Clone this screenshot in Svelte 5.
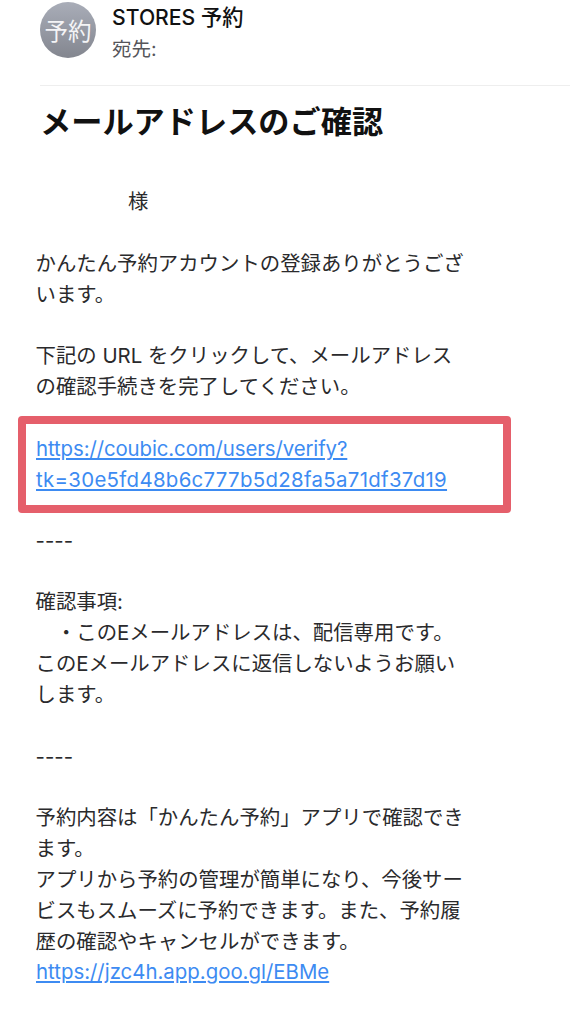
<script>
  const sections = [
    { kind: "text", lines: ["かんたん予約アカウントの登録ありがとうござ", "います。"] },
    { kind: "text", lines: ["下記の URL をクリックして、メールアドレス", "の確認手続きを完了してください。"] },
    { kind: "link", lines: ["https://coubic.com/users/verify?", "tk=30e5fd48b6c777b5d28fa5a71df37d19"] },
    { kind: "text", lines: ["----"] },
    { kind: "text", lines: ["確認事項:", "　・このEメールアドレスは、配信専用です。", "このEメールアドレスに返信しないようお願い", "します。"] },
    { kind: "text", lines: ["----"] },
  ];
</script>

<div class="mail">
  <header class="sender">
    <div class="avatar">予約</div>
    <div class="sender-info">
      <div class="sender-name">STORES 予約</div>
      <div class="sender-to">宛先:</div>
    </div>
  </header>

  <div class="content">
    <h1 class="subject">メールアドレスのご確認</h1>

    <div class="body">
      <p class="greeting">様</p>

      {#each sections as section}
        {#if section.kind === "link"}
          <p class="highlight">
            <a href="https://coubic.com/users/verify"><span class="url-a">{section.lines[0]}</span><br /><span class="url-b">{section.lines[1]}</span></a>
          </p>
        {:else}
          <p>
            {#each section.lines as line}
              <span class="line">{line}</span>
            {/each}
          </p>
        {/if}
      {/each}

      <p>
        <span class="line">予約内容は「かんたん予約」アプリで確認でき</span>
        <span class="line">ます。</span>
        <span class="line">アプリから予約の管理が簡単になり、今後サー</span>
        <span class="line">ビスもスムーズに予約できます。また、予約履</span>
        <span class="line">歴の確認やキャンセルができます。</span>
        <a href="https://jzc4h.app.goo.gl/EBMe">https://jzc4h.app.goo.gl/EBMe</a>
      </p>
    </div>
  </div>
</div>

<style>
  :global(body) {
    background: #ffffff;
  }

  .mail {
    width: 570px;
    height: 1020px;
    overflow: hidden;
    background: #ffffff;
    color: #2a2a2c;
    font-family: Inter, "Noto Sans CJK JP", sans-serif;
  }

  .sender {
    display: flex;
    gap: 16px;
    margin-left: 40px;
    padding-top: 2px;
    height: 86px;
    box-sizing: border-box;
    border-bottom: 1px solid #eeeeee;
  }

  .avatar {
    width: 56px;
    height: 56px;
    border-radius: 50%;
    display: flex;
    align-items: center;
    justify-content: center;
    background: linear-gradient(#a9adb8, #83868f);
    color: #f4f4f6;
    font-size: 23.5px;
  }

  .sender-name {
    font-size: 21.2px;
    line-height: 30px;
    font-weight: 500;
    color: #111111;
  }

  .sender-to {
    margin-top: 3px;
    font-size: 19.5px;
    line-height: 28px;
    color: #55555a;
  }

  .subject {
    margin: 15px 0 0 40px;
    font-size: 31.2px;
    line-height: 42px;
    font-weight: 700;
    color: #111111;
  }

  .body {
    margin-top: 44px;
    padding-left: 36px;
    font-size: 20.4px;
    line-height: 30.84px;
  }

  p {
    margin: 0 0 30.84px;
  }

  .line {
    display: block;
    white-space: pre;
    margin-left: -0.5px;
  }

  .greeting {
    padding-left: 92px;
  }

  .highlight {
    width: 493px;
    height: 97px;
    box-sizing: border-box;
    margin: -18px 0 13px -18px;
    padding: 2px 0 0 10px;
    border: 8px solid #e55f6b;
    border-radius: 4px;
    display: flex;
    align-items: center;
    white-space: nowrap;
  }

  a {
    color: #3d8bf2;
    text-decoration: underline;
    text-underline-offset: 2px;
  }

  .url-a {
    letter-spacing: -0.1px;
  }

  .url-b {
    letter-spacing: 0.32px;
  }
</style>
